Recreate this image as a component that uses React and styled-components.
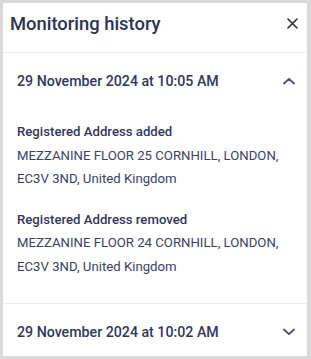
import React from "react";
import styled, { createGlobalStyle } from "styled-components";

const Global = createGlobalStyle`
  html, body { margin: 0; padding: 0; background: #d9d9d9; }
  body { font-family: Roboto, "Noto Sans", sans-serif; -webkit-font-smoothing: antialiased; }
`;

const Panel = styled.div`
  margin: 3px 4px 3px 3px;
  height: 353px;
  background: #ffffff;
  overflow: hidden;
  display: flex;
  flex-direction: column;
  & > * { flex-shrink: 0; }
`;

const Header = styled.div`
  display: flex;
  align-items: center;
  justify-content: space-between;
  height: 40px;
  padding: 0 9px 9px 7px;
  border-bottom: 1px solid #eceef2;
`;

const Title = styled.h1`
  margin: 0;
  font-size: 18.4px;
  font-weight: 500;
  color: #2f3153;
`;

const IconButton = styled.button`
  border: 0;
  background: none;
  padding: 0;
  width: 12px;
  height: 12px;
  display: flex;
  align-items: center;
  justify-content: center;
  cursor: pointer;
`;

const Section = styled.section`
  padding: 0 12px ${(p) => (p.$open ? "25px" : "0")} 14px;
  border-bottom: ${(p) => (p.$divider ? "1px solid #eceef2" : "0")};
`;

const Row = styled.div`
  display: flex;
  align-items: center;
  justify-content: space-between;
  height: 56px;
`;

const DateText = styled.div`
  font-size: 14.2px;
  font-weight: 500;
  color: #33365a;
`;

const Body = styled.div`
  display: flex;
  flex-direction: column;
  gap: 17px;
  padding-top: 11px;
`;

const Change = styled.div`
  font-size: 13.2px;
  line-height: 23.5px;
  color: #3d4066;
`;

const Label = styled.div`
  font-weight: 500;
  color: #33365a;
`;

const Chevron = ({ up }) => (
  <svg width="12" height="8" viewBox="0 0 12 8" fill="none">
    <path
      d={up ? "M1 6.5 L6 1.8 L11 6.5" : "M1 1.5 L6 6.2 L11 1.5"}
      stroke="#4b4e70"
      strokeWidth="1.8"
      strokeLinecap="round"
      strokeLinejoin="round"
    />
  </svg>
);

const changes = [
  {
    label: "Registered Address added",
    text: "MEZZANINE FLOOR 25 CORNHILL, LONDON, EC3V 3ND, United Kingdom",
  },
  {
    label: "Registered Address removed",
    text: "MEZZANINE FLOOR 24 CORNHILL, LONDON, EC3V 3ND, United Kingdom",
  },
];

export default function App() {
  return (
    <>
      <Global />
      <Panel>
        <Header>
          <Title>Monitoring history</Title>
          <IconButton aria-label="Close">
            <svg width="11" height="11" viewBox="0 0 11 11" fill="none">
              <path d="M1 1 L10 10 M10 1 L1 10" stroke="#2a2c40" strokeWidth="1.6" strokeLinecap="round" />
            </svg>
          </IconButton>
        </Header>
        <Section $divider $open>
          <Row>
            <DateText>29 November 2024 at 10:05 AM</DateText>
            <Chevron up />
          </Row>
          <Body>
            {changes.map((c) => (
              <Change key={c.label}>
                <Label>{c.label}</Label>
                <div>{c.text}</div>
              </Change>
            ))}
          </Body>
        </Section>
        <Section>
          <Row>
            <DateText>29 November 2024 at 10:02 AM</DateText>
            <Chevron />
          </Row>
        </Section>
      </Panel>
    </>
  );
}
